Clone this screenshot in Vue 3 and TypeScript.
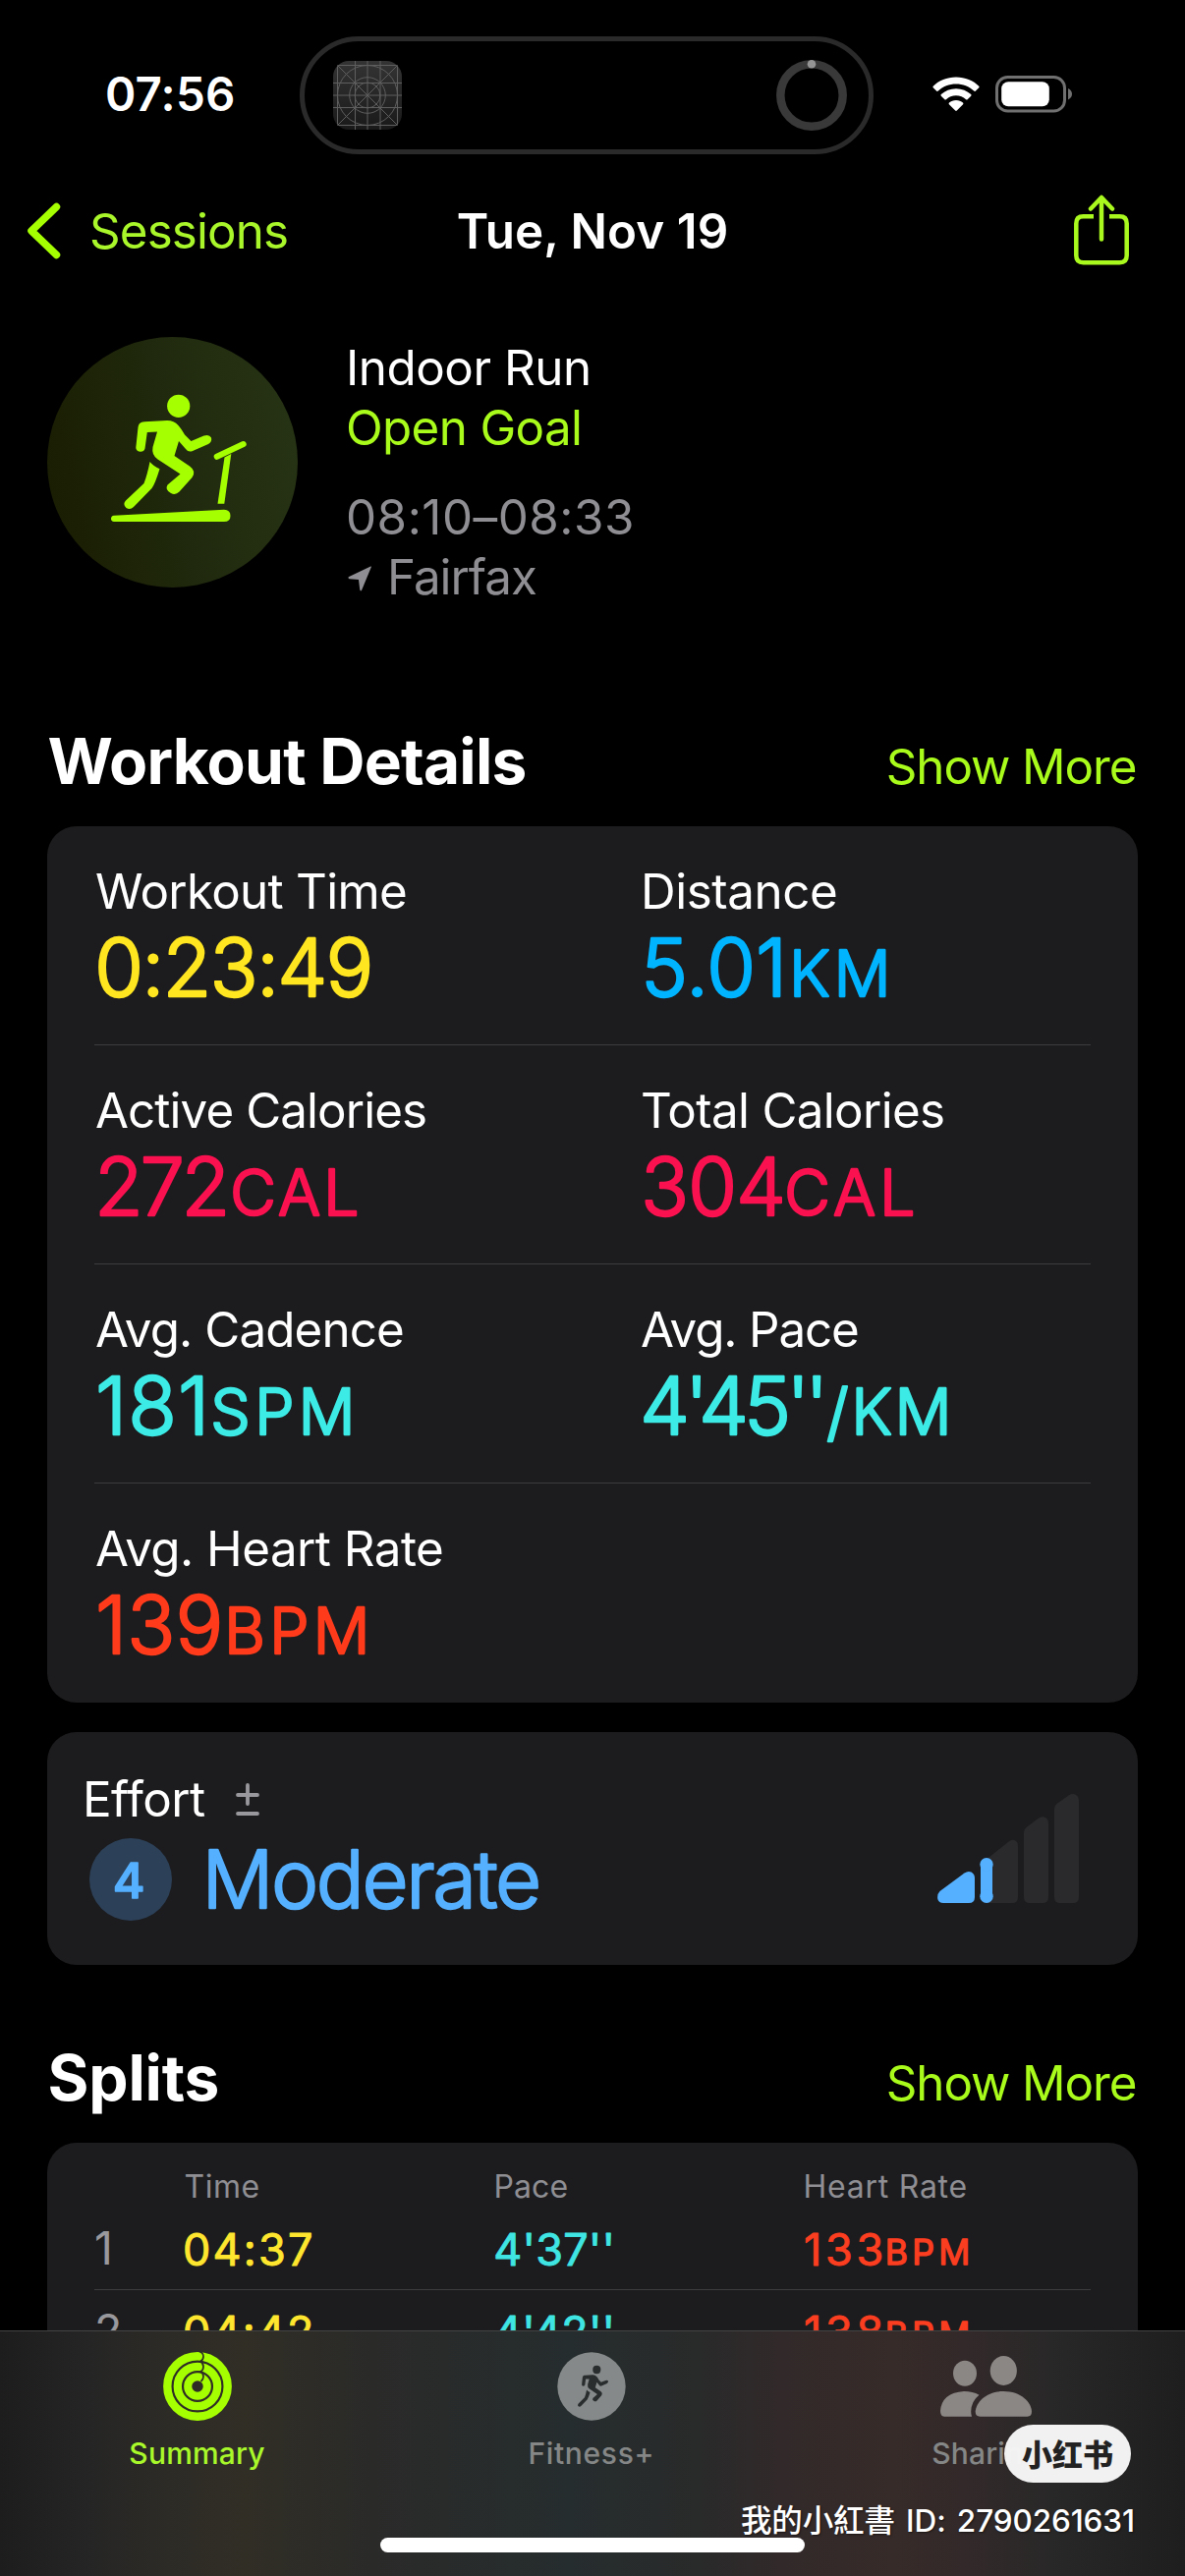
<script setup lang="ts">
interface Metric {
  label: string
  labelWidth: number
  value: string
  unit?: string
  color: string
  // Ink extents, in pixels from the start of the column
  valueBox: [number, number]
  unitBox?: [number, number]
}

interface Split {
  index: number
  time: string
  pace: string
  heartRate: string
}

const metricRows: Metric[][] = [
  [
    { label: 'Workout Time', labelWidth: 315, value: '0:23:49', color: '#ffe620', valueBox: [4, 281] },
    { label: 'Distance', labelWidth: 195, value: '5.01', unit: 'KM', color: '#00b4ff', valueBox: [6, 143.5], unitBox: [157, 251] },
  ],
  [
    { label: 'Active Calories', labelWidth: 335, value: '272', unit: 'CAL', color: '#fa114f', valueBox: [5, 134], unitBox: [141, 267.5] },
    { label: 'Total Calories', labelWidth: 306, value: '304', unit: 'CAL', color: '#fa114f', valueBox: [5, 145.5], unitBox: [150, 278.5] },
  ],
  [
    { label: 'Avg. Cadence', labelWidth: 312, value: '181', unit: 'SPM', color: '#3debe6', valueBox: [4, 110.5], unitBox: [121, 261] },
    { label: 'Avg. Pace', labelWidth: 220, value: "4'45''", unit: '/KM', color: '#3debe6', valueBox: [4, 184.7], unitBox: [190, 313] },
  ],
  [
    { label: 'Avg. Heart Rate', labelWidth: 352, value: '139', unit: 'BPM', color: '#ff3b1c', valueBox: [4, 128], unitBox: [137, 276] },
  ],
]

const splits: Split[] = [
  { index: 1, time: '04:37', pace: "4'37''", heartRate: '133' },
  { index: 2, time: '04:42', pace: "4'42''", heartRate: '138' },
]

const ctx = document.createElement('canvas').getContext('2d')

function measure(el: Element) {
  const style = getComputedStyle(el)
  const text = (el.textContent ?? '').trim()
  if (!ctx) return null
  ctx.font = `${style.fontWeight} ${style.fontSize} ${style.fontFamily}`
  const m = ctx.measureText(text)
  return {
    left: -m.actualBoundingBoxLeft,
    width: m.actualBoundingBoxRight + m.actualBoundingBoxLeft,
    gaps: Math.max([...text].length - 1, 1),
    single: [...text].length < 2,
  }
}

// Tracks a text run so that its glyphs span the given width
const vFit = {
  mounted(el: HTMLElement, binding: { value: number }) {
    const m = measure(el)
    if (!m || m.single) return
    const spacing = (binding.value - m.width) / m.gaps
    el.style.letterSpacing = `${spacing.toFixed(3)}px`
    el.style.marginRight = `${(-spacing).toFixed(3)}px`
  },
}

// Places an SVG text run between two horizontal extents
const vSpan = {
  mounted(el: SVGTextElement, binding: { value: [number, number] | undefined }) {
    const m = measure(el)
    if (!m || !binding.value) return
    const half = parseFloat(getComputedStyle(el).strokeWidth) / 2 || 0
    const [from, to] = binding.value
    el.setAttribute('x', (from - m.left + half).toFixed(2))
    if (!m.single) {
      el.style.letterSpacing = `${((to - from - half * 2 - m.width) / m.gaps).toFixed(3)}px`
    }
  },
}
</script>

<template>
  <div class="phone">
    <svg class="defs" width="0" height="0" aria-hidden="true">
      <defs>
        <g id="runner">
          <circle cx="133.7" cy="70.3" r="11.6" />
          <path d="M97 86.500 Q97.500 86.500 99 86.300 L122 85.100 Q129 85 133.500 90 Q137 94 140 99.500 L146.500 106 L159.500 100.500 Q165 98.600 167 102.500 Q168 106.500 164 109 L147.500 116.200 Q143.500 117.500 141 114 L134 106 L129.500 121 L145 131.500 Q152 136.500 147.500 143 L134.500 157.500 Q130.500 161.500 126 159 Q119.500 155.500 122.500 150.500 L135.500 139.500 L112.500 124.500 Q106 120 107.500 112 L112 96.500 L101.800 97 L99.500 113.500 Q98.500 117 94.500 116.700 Q90.200 116 90.300 112.500 L92.500 92 Q93 87.300 97 86.500Z" />
          <path d="M104.500 127 Q108 131.500 114.500 134.200 Q110 149 106.500 154 L88 173 Q84.500 176.500 80.500 174 Q76.500 170.500 80 166.500 L98.500 149 Q102 140 104.500 127Z" />
        </g>
      </defs>
    </svg>

    <main class="screen">
      <div class="status">
        <div class="clock"><span v-fit="128">07:56</span></div>
        <div class="island">
          <svg width="70" height="70" viewBox="0 0 70 70">
            <defs>
              <linearGradient id="placeholder" x1="0" y1="0" x2="0" y2="1">
                <stop offset="0" stop-color="#343434" />
                <stop offset="1" stop-color="#191919" />
              </linearGradient>
            </defs>
            <rect width="70" height="70" rx="16" fill="url(#placeholder)" />
            <g fill="none" stroke="#5e5e5e" stroke-width="1">
              <rect x="4.500" y="4.500" width="61" height="61" rx="1" />
              <path d="M22.500 0V70M35 0V70M48 0V70M0 22.500H70M0 35H70M0 47.500H70M4.500 4.500L65.500 65.500M65.500 4.500L4.500 65.500" />
              <circle cx="35" cy="35" r="30.500" />
              <circle cx="35" cy="35" r="18.300" />
              <circle cx="35" cy="35" r="12.900" />
            </g>
          </svg>
          <svg width="72" height="72" viewBox="0 0 72 72">
            <circle cx="36" cy="36" r="31.700" fill="none" stroke="#39393a" stroke-width="8.500" />
            <circle cx="36" cy="4.300" r="4.300" fill="#949495" />
          </svg>
        </div>
        <svg class="wifi" width="48" height="36" viewBox="0 0 48 36" fill="#fff">
          <path d="M24 0.500 C33.300 0.500 41.500 4 47.300 9.700 Q48 10.500 47.300 11.200 L43.700 14.700 Q43 15.300 42.200 14.600 C37.400 10.100 31 7.500 24 7.500 C17 7.500 10.600 10.100 5.800 14.600 Q5 15.300 4.300 14.700 L0.700 11.200 Q0 10.500 0.700 9.700 C6.500 4 14.700 0.500 24 0.500Z" />
          <path d="M24 12.200 C30 12.200 35.200 14.500 39.200 18.100 Q40 18.900 39.200 19.700 L35.600 23.200 Q34.900 23.800 34.100 23.200 C31.400 20.800 28 19.300 24 19.300 C20 19.300 16.600 20.800 13.900 23.200 Q13.100 23.800 12.400 23.200 L8.800 19.700 Q8 18.900 8.800 18.100 C12.800 14.500 18 12.200 24 12.200Z" />
          <path d="M24 24 C26.800 24 29.200 25 31 26.600 Q31.900 27.400 31.100 28.200 L24.800 34.500 Q24 35.300 23.200 34.500 L16.900 28.200 Q16.100 27.400 17 26.600 C18.800 25 21.200 24 24 24Z" />
        </svg>
        <svg class="battery" width="79" height="38" viewBox="0 0 79 38">
          <rect x="1.500" y="1.500" width="69" height="34.500" rx="11" fill="none" stroke="#707070" stroke-width="3" />
          <rect x="6.200" y="6.200" width="48.600" height="25" rx="7" fill="#fff" />
          <path d="M74 13 Q78 15 78 18.800 Q78 22.500 74 24.500Z" fill="#707070" />
        </svg>
      </div>

      <nav class="nav">
        <div class="back">
          <svg width="35" height="58" viewBox="0 0 35 58">
            <path d="M29.500 4.500L4 29L29.500 53.500" fill="none" stroke="#a6ff00" stroke-width="7.500" stroke-linecap="round" stroke-linejoin="round" />
          </svg>
          <span v-fit="199">Sessions</span>
        </div>
        <h1><span v-fit="275">Tue, Nov 19</span></h1>
        <svg class="share" width="56" height="72" viewBox="0 0 56 72">
          <g fill="none" stroke="#a9f91e" stroke-width="4.500" stroke-linecap="round" stroke-linejoin="round">
            <path stroke-linecap="butt" d="M20 22.300H9.500Q2.300 22.300 2.300 29.500V62Q2.300 69.200 9.500 69.200H46.500Q53.700 69.200 53.700 62V29.500Q53.700 22.300 46.500 22.300H36" />
            <path d="M28 45.500V3.500M17 14.500L28 3L39 14.500" />
          </g>
        </svg>
      </nav>

      <section class="hero">
        <svg width="255" height="255" viewBox="0 0 255 255">
          <defs>
            <linearGradient id="disc" x1="0" y1="0.600" x2="1" y2="0.400">
              <stop offset="0" stop-color="#1a1e02" />
              <stop offset="0.500" stop-color="#20290d" />
              <stop offset="1" stop-color="#273315" />
            </linearGradient>
          </defs>
          <circle cx="127.500" cy="127.500" r="127.500" fill="url(#disc)" />
          <g fill="#a6ff00">
            <use href="#runner" />
            <path d="M68 181.800L180 175.800Q186.500 176 186.500 182Q186.500 188 180 188H68Q65 187.500 65 185Q65 182.200 68 181.800Z" />
            <path d="M180.500 122.500L187.300 119L180.300 169.700H173.500Z" />
            <path d="M172.700 121.800L199.700 109" fill="none" stroke="#a6ff00" stroke-width="6" stroke-linecap="round" />
          </g>
        </svg>
        <div class="hero-text">
          <p><span v-fit="243">Indoor Run</span></p>
          <p class="goal"><span v-fit="236">Open Goal</span></p>
          <p class="muted when"><span v-fit="289">08:10–08:33</span></p>
          <p class="muted place">
            <svg width="25" height="26" viewBox="0 0 25 26"><path d="M23.800 1.200Q24.600 0.200 22.700 0.800L1.200 11Q-0.600 12.300 1.500 13.200L11 14L12.200 24Q12.800 26.500 14.200 24.500Z" fill="#8e8e93" /></svg>
            <span v-fit="148">Fairfax</span>
          </p>
        </div>
      </section>

      <header class="section-head">
        <h2><span v-fit="485">Workout Details</span></h2>
        <span class="more"><span v-fit="252">Show More</span></span>
      </header>

      <section class="card metrics">
        <div v-for="(row, r) in metricRows" :key="r" class="metric-row">
          <div v-for="m in row" :key="m.label" class="metric">
            <div class="label"><span v-fit="m.labelWidth">{{ m.label }}</span></div>
            <svg class="value" width="455" height="84" :fill="m.color" :stroke="m.color">
              <text v-span="m.valueBox" class="num" y="76">{{ m.value }}</text>
              <text v-if="m.unit" v-span="m.unitBox" class="unit" y="76">{{ m.unit }}</text>
            </svg>
          </div>
        </div>
      </section>

      <section class="card effort">
        <div class="effort-main">
          <div class="effort-label">
            <span v-fit="121">Effort</span>
            <svg width="24" height="34" viewBox="0 0 24 34">
              <path d="M12 2V21M2 12H22M2 31H22" stroke="#98989d" stroke-width="3.800" stroke-linecap="round" />
            </svg>
          </div>
          <div class="effort-level">
            <svg width="84" height="84" fill="#55b0ff" stroke="#55b0ff">
              <circle cx="42" cy="42" r="42" fill="#2c4058" stroke="none" />
              <text v-span="[25, 57]" class="badge" y="60.500">4</text>
            </svg>
            <svg class="value" width="400" height="84" fill="#55b0ff" stroke="#55b0ff">
              <text v-span="[36.500, 373.500]" class="num" y="71">Moderate</text>
            </svg>
          </div>
        </div>
        <svg class="bars" width="144" height="111" viewBox="0 0 144 111">
          <g fill="#2a2a2c">
            <path d="M50 66.500L72.500 48.500Q76 46 79 47.300Q82 49 82 53V105Q82 111 76 111H50Z" />
            <path d="M88 86V39Q88 36 90.500 34L102.500 25Q106.500 22 110 24Q113 26 113 30V105Q113 111 107 111H94Q88 111 88 105Z" />
            <path d="M119 86V15Q119 12 121.500 10L133.500 1.500Q137.500 -1 141 1Q144 3 144 7V105Q144 111 138 111H125Q119 111 119 105Z" />
          </g>
          <g fill="#55b0ff">
            <path d="M2.500 99L27.500 80.500Q31 78 34.500 79.500Q38 81.500 38 85.500V105Q38 111 32 111H6Q1.500 111 0.300 107Q-0.500 102 2.500 99Z" />
            <rect x="44" y="69" width="12" height="38" />
            <circle cx="50" cy="71.700" r="6.700" />
            <circle cx="50" cy="104.300" r="6.700" />
          </g>
        </svg>
      </section>

      <header class="section-head splits-head">
        <h2><span v-fit="171">Splits</span></h2>
        <span class="more"><span v-fit="252">Show More</span></span>
      </header>

      <section class="card splits">
        <div class="split-row head">
          <span></span>
          <span><span v-fit="75">Time</span></span>
          <span><span v-fit="73">Pace</span></span>
          <span><span v-fit="164">Heart Rate</span></span>
        </div>
        <div v-for="s in splits" :key="s.index" class="split-row">
          <span class="index">{{ s.index }}</span>
          <svg class="value" width="300" height="83" fill="#ffe62e" stroke="#ffe62e">
            <text v-span="[1.500, 131.500]" class="small-num" y="58.500">{{ s.time }}</text>
          </svg>
          <svg class="value" width="300" height="83" fill="#3fe5e2" stroke="#3fe5e2">
            <text v-span="[2.700, 121]" class="small-num" y="58.500">{{ s.pace }}</text>
          </svg>
          <svg class="value" width="290" height="83" fill="#fb3d20" stroke="#fb3d20">
            <text v-span="[3.500, 82]" class="small-num" y="58.500">{{ s.heartRate }}</text>
            <text v-span="[87, 169]" class="small-unit" y="58.300">BPM</text>
          </svg>
        </div>
      </section>
    </main>

    <footer class="tabbar">
      <div class="tab active">
        <svg width="70" height="70" viewBox="0 0 70 70">
          <g fill="none" stroke="#a6ff00">
            <circle cx="35" cy="35" r="30.700" stroke-width="8.400" />
            <circle cx="35" cy="35" r="20.200" stroke-width="8.300" />
            <circle cx="35" cy="35" r="9.800" stroke-width="8.100" />
          </g>
          <path d="M37 -0.500Q41 1 41 4.500Q41 8 38 9.500Q41 11.500 41 15Q41 18.500 38 20Q41 21.500 41 25Q41 28 38.500 30" fill="none" stroke="#2d2d24" stroke-width="1.700" />
        </svg>
        <span class="tab-label"><span v-fit="137">Summary</span></span>
      </div>
      <div class="tab">
        <svg width="70" height="70" viewBox="0 0 70 70">
          <circle cx="35" cy="35" r="34.700" fill="#858989" />
          <use href="#runner" transform="translate(-6.500 -7.300) scale(0.350 0.360)" fill="#2a2d2d" />
        </svg>
        <span class="tab-label"><span v-fit="124">Fitness+</span></span>
      </div>
      <div class="tab">
        <svg width="94" height="70" viewBox="0 0 94 70" fill="#8b8785">
          <ellipse cx="25" cy="21.700" rx="12" ry="13" />
          <ellipse cx="64.300" cy="19" rx="13.600" ry="15" />
          <path d="M24 40Q33 40 39.500 43.700Q31.500 50 31.200 60.500Q31.200 63.500 32 65.700H4Q0 65.500 0 60Q1.500 41.500 24 40Z" />
          <path d="M64.300 40C82 40 92.500 51 93 60.500Q93 65.700 88.500 65.700H40.500Q35.700 65.700 35.700 60.500C36.500 51 46.500 40 64.300 40Z" />
        </svg>
        <span class="tab-label"><span v-fit="109">Sharing</span></span>
      </div>
      <div class="home-indicator"></div>
      <div class="brand"><span>小红书</span></div>
      <div class="watermark"><span v-fit="392">我的小紅書 ID: 2790261631</span></div>
    </footer>
  </div>
</template>

<style>
body {
  background: #000;
}
</style>

<style scoped>
.phone {
  width: 1206px;
  height: 2622px;
  display: flex;
  flex-direction: column;
  overflow: hidden;
  background: #000;
  color: #fff;
  font-family: Inter, "Noto Sans CJK SC", sans-serif;
  font-size: 49.300px;
  font-weight: 400;
  font-variant-ligatures: none;
}

.phone svg {
  display: block;
  flex: none;
}

.phone .defs {
  position: absolute;
}

h1,
h2,
p {
  margin: 0;
  white-space: nowrap;
}

.screen {
  flex: 1;
  min-height: 0;
  overflow: hidden;
}

/* Status bar */
.status {
  display: flex;
  align-items: center;
  height: 120px;
  padding: 37px 0 0 107px;
}

.clock {
  width: 198px;
  font-size: 47.500px;
  font-weight: 600;
  line-height: 60px;
  margin-top: -2px;
}

.island {
  box-sizing: border-box;
  display: flex;
  align-items: center;
  justify-content: space-between;
  width: 584px;
  height: 120px;
  padding: 0 22px 0 29px;
  border: 5px solid #2a2a2b;
  border-radius: 60px;
}

.wifi {
  margin: -2px 0 0 60px;
}

.battery {
  margin: -2px 0 0 16px;
}

/* Navigation */
.nav {
  display: grid;
  grid-template-columns: 1fr auto 1fr;
  align-items: center;
  height: 156px;
  padding: 0 57px 0 28px;
}

.back {
  display: flex;
  align-items: center;
  gap: 28px;
  color: #a9f72b;
  line-height: 60px;
}

.nav h1 {
  font-size: 49.300px;
  font-weight: 600;
  line-height: 60px;
  margin-left: 29px;
}

.share {
  justify-self: end;
  margin-top: -2px;
}

/* Workout summary */
.hero {
  display: flex;
  height: 255px;
  margin: 30px 48px 0;
  gap: 49px;
}

.hero-text {
  line-height: 61px;
  padding-top: 1px;
}

.goal,
.more {
  color: #a9fb1b;
}

.muted {
  color: #8e8e93;
}

.when {
  margin-top: 30px;
}

.place {
  display: flex;
  align-items: center;
  gap: 15px;
  margin-left: 2px;
}

.place svg {
  margin-top: 3px;
}

.section-head {
  display: flex;
  align-items: baseline;
  justify-content: space-between;
  height: 70px;
  margin: 142px 48.500px 31px 48.500px;
  line-height: 70px;
}

.splits-head {
  margin-top: 80px;
}

.section-head h2 {
  font-size: 64px;
  font-weight: 700;
}

/* Cards */
.card {
  margin: 0 48px;
  border-radius: 30px;
  background: #1c1c1e;
}

.metrics {
  padding: 0 48px;
}

.metric-row {
  box-sizing: border-box;
  display: grid;
  grid-template-columns: 555px 459px;
  height: 223px;
  padding-top: 36px;
  border-bottom: 1px solid #3c3c3e;
}

.metric-row:last-child {
  border-bottom: none;
}

.label {
  padding-left: 1px;
  line-height: 61px;
  white-space: nowrap;
}

.value {
  overflow: visible;
}

text {
  font-family: Inter, sans-serif;
  stroke-linejoin: round;
  stroke-linecap: round;
}

.num {
  font-size: 80.500px;
  font-weight: 300;
  stroke-width: 2.400px;
}

.unit {
  font-size: 64px;
  font-weight: 300;
  stroke-width: 2.500px;
}

.small-num {
  font-size: 45px;
  font-weight: 400;
  stroke-width: 0.900px;
}

.small-unit {
  font-size: 35.500px;
  font-weight: 400;
  stroke-width: 1.400px;
}

.badge {
  font-size: 50px;
  font-weight: 500;
  stroke-width: 1.500px;
}

.effort {
  display: flex;
  justify-content: space-between;
  box-sizing: border-box;
  height: 237px;
  margin-top: 30px;
  padding: 38px 60px 0 36px;
}

.effort-label {
  display: flex;
  align-items: center;
  gap: 31px;
  line-height: 61px;
}

.effort-level {
  display: flex;
  margin: 9px 0 0 7px;
}

.bars {
  margin-top: 25px;
}

/* Splits */
.splits {
  padding: 25px 48px 40px;
}

.split-row {
  box-sizing: border-box;
  display: grid;
  grid-template-columns: 90px 315px 315px 1fr;
  height: 84px;
  border-bottom: 1px solid #3c3c3e;
}

.split-row.head {
  height: 41px;
  border: none;
  color: #8e8e93;
  font-size: 32px;
  line-height: 40px;
}

.split-row.head > span {
  padding-left: 1.500px;
}

.index {
  color: #98989d;
  font-size: 46.500px;
  line-height: 83px;
}

/* Tab bar */
.tabbar {
  position: relative;
  box-sizing: border-box;
  display: grid;
  grid-template-columns: 401px 401px 404px;
  height: 250px;
  padding-top: 21px;
  border-top: 1px solid #434343;
  background: linear-gradient(
    90deg,
    #1d1d1d 0,
    #252525 90px,
    #2d2b26 170px,
    #302e25 250px,
    #2a2a29 380px,
    #272c2c 520px,
    #262d2e 580px,
    #292a2a 710px,
    #32292a 800px,
    #362b28 910px,
    #33292a 980px,
    #292828 1070px,
    #1e1e1e 1206px
  );
}

.tab {
  display: flex;
  flex-direction: column;
  align-items: center;
  color: #858787;
}

.tab-label {
  margin-top: 15px;
  font-size: 30px;
  font-weight: 500;
  line-height: 36px;
}

.tab.active {
  color: #a9f92a;
}

.home-indicator {
  position: absolute;
  left: 387px;
  top: 210px;
  width: 432px;
  height: 15px;
  border-radius: 8px;
  background: #fff;
}

.brand {
  position: absolute;
  right: 55px;
  top: 95px;
  width: 129px;
  height: 59px;
  border-radius: 30px;
  background: rgba(245, 245, 245, 0.985);
  color: #222;
  font-family: "Noto Sans CJK SC", sans-serif;
  font-size: 31px;
  font-weight: 900;
  line-height: 57px;
  text-align: center;
}

.watermark {
  position: absolute;
  right: 51px;
  top: 171px;
  font-size: 31.500px;
  line-height: 44px;
  font-weight: 500;
  white-space: nowrap;
  word-spacing: 3px;
  text-shadow: 1px 1px 2px rgba(0, 0, 0, 0.5);
}
</style>
